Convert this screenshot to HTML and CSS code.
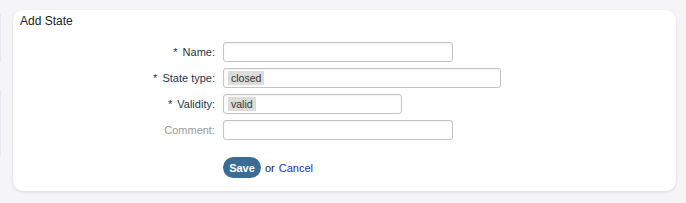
FILE: index.html
```html
<!DOCTYPE html>
<html>
<head>
<meta charset="utf-8">
<link rel="stylesheet" href="styles.css">
</head>
<body>
<div class="page">
  <div class="edge edge-top"></div>
  <div class="edge edge-bottom"></div>
  <div class="card">
    <h2 class="card-title">Add State</h2>
    <form class="form">
      <label class="label required"><span class="star">*</span> Name:</label>
      <div class="field"><input class="input w-name" type="text"></div>
      <label class="label required"><span class="star">*</span> State type:</label>
      <div class="field"><div class="input select w-type"><span class="tag">closed</span></div></div>
      <label class="label required"><span class="star">*</span> Validity:</label>
      <div class="field"><div class="input select w-valid"><span class="tag">valid</span></div></div>
      <label class="label optional">Comment:</label>
      <div class="field"><input class="input w-name" type="text"></div>
      <div></div>
      <div class="actions"><button type="button" class="btn">Save</button> <span class="or">or</span> <a class="cancel" href="#">Cancel</a></div>
    </form>
  </div>
</div>
</body>
</html>
```
FILE: styles.css
```css
html, body {
  margin: 0;
  padding: 0;
  background: #f5f5f8;
  font-family: "Liberation Sans", Arial, sans-serif;
}
.page {
  position: relative;
  padding: 10px 10px 12px 13px;
  height: 203px;
  box-sizing: border-box;
}
.edge {
  position: absolute;
  left: 0;
  width: 1px;
  background: #e8e8ee;
}
.edge-top { top: 14px; height: 48px; }
.edge-bottom { top: 90px; height: 66px; }
.card {
  background: #fff;
  border-radius: 10px;
  box-shadow: 0 1px 3px rgba(0, 0, 0, 0.12);
  height: 181px;
  box-sizing: border-box;
  padding: 4px 7px 0 7px;
}
.card-title {
  margin: 0;
  font-size: 12px;
  font-weight: normal;
  color: #222;
  line-height: 15px;
}
.form {
  display: grid;
  grid-template-columns: 195px auto;
  column-gap: 8px;
  row-gap: 6px;
  margin-top: 13px;
  align-items: center;
}
.label {
  text-align: right;
  font-size: 11px;
  color: #1f3550;
}
.label.optional { color: #999; }
.star { margin-right: 2px; }
.field { display: flex; }
.input {
  box-sizing: border-box;
  height: 20px;
  border: 1px solid #c3c3c3;
  border-radius: 3px;
  background: #fff;
  box-shadow: inset 0 1px 2px rgba(0,0,0,0.06);
  margin: 0;
  padding: 0 4px;
  font-family: inherit;
  font-size: 12px;
}
.w-name { width: 230px; }
.w-type { width: 278px; }
.w-valid { width: 179px; }
.select {
  display: flex;
  align-items: center;
  padding: 0 4px;
}
.tag {
  background: #dcdcdc;
  color: #333;
  font-size: 10.5px;
  line-height: 14px;
  padding: 0 3px;
}
.actions {
  margin-top: 11px;
  display: flex;
  align-items: center;
  gap: 4px;
  font-size: 11px;
}
.btn {
  background: #3a6c94;
  color: #fff;
  border: none;
  border-radius: 11px;
  height: 21px;
  width: 38px;
  padding: 0;
  font-family: inherit;
  font-size: 11px;
  font-weight: bold;
}
.or { color: #222; }
.cancel { color: #1a2ee0; text-decoration: none; }
```
